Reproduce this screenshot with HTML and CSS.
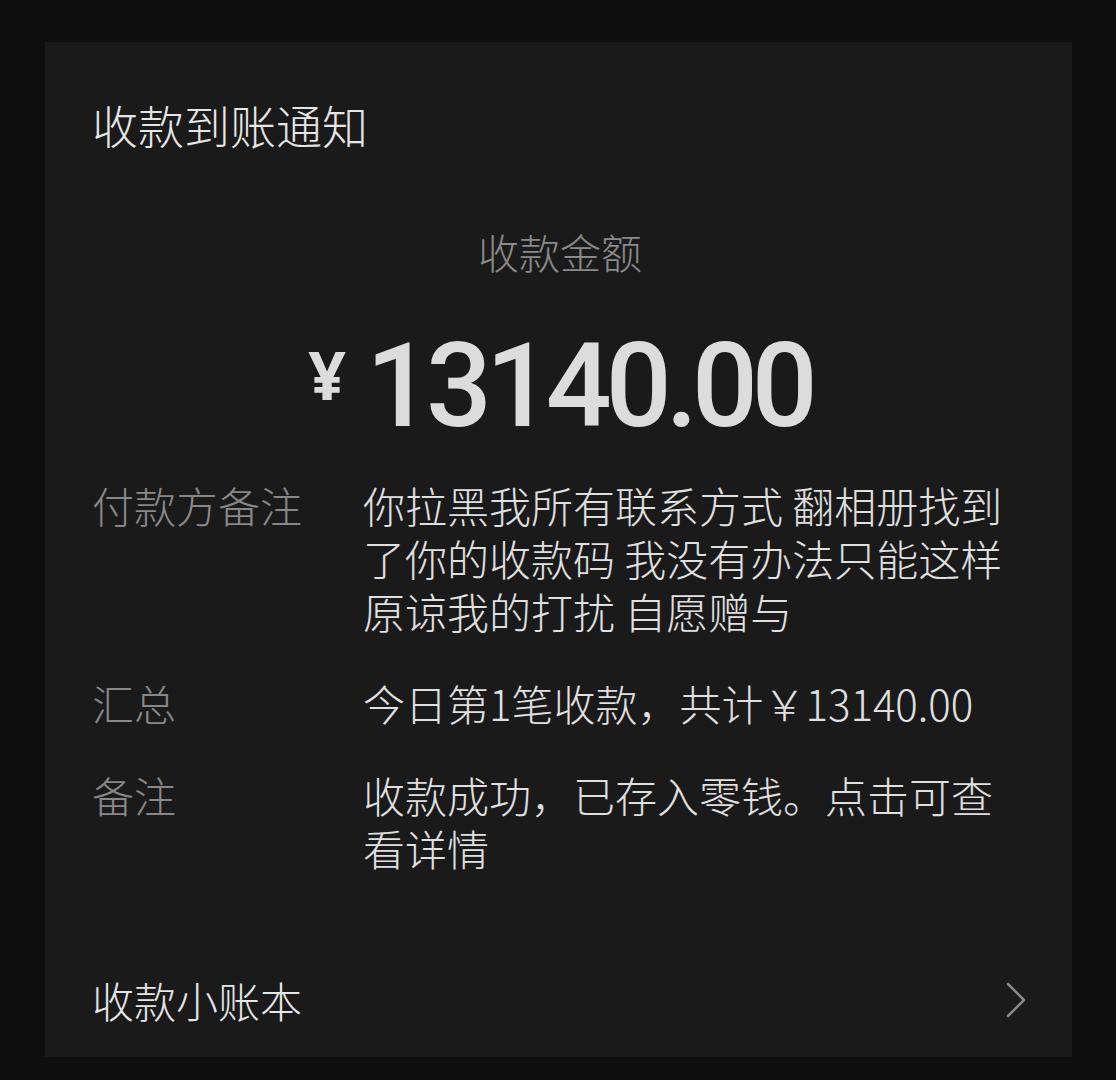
FILE: index.html
```html
<!DOCTYPE html>
<html lang="zh-CN">
<head>
    <meta charset="UTF-8">
    <meta name="viewport" content="width=device-width, initial-scale=1.0">
    <title>收款到账通知</title>
    <link rel="stylesheet" href="styles.css">
</head>
<body>
    <div class="notice-card">
        <h1 class="notice-title">收款到账通知</h1>

        <div class="amount-label">收款金额</div>
        <div class="amount">
            <span class="amount-sign">¥</span>
            <span class="amount-value">13140.00</span>
        </div>

        <div class="detail-list">
            <div class="detail-row">
                <div class="detail-key">付款方备注</div>
                <div class="detail-value">你拉黑我所有联系方式 翻相册找到了你的收款码 我没有办法只能这样原谅我的打扰 自愿赠与</div>
            </div>
            <div class="detail-row">
                <div class="detail-key">汇总</div>
                <div class="detail-value">今日第1笔收款，共计￥13140.00</div>
            </div>
            <div class="detail-row">
                <div class="detail-key">备注</div>
                <div class="detail-value">收款成功，已存入零钱。点击可查看详情</div>
            </div>
        </div>

        <div class="notice-footer">
            <span>收款小账本</span>
            <svg class="chevron" width="24" height="38" viewBox="0 0 24 38">
                <polyline points="4,3 20,19 4,35" fill="none" stroke="#8a8a8a" stroke-width="2.5" stroke-linecap="round" stroke-linejoin="round"/>
            </svg>
        </div>
    </div>
</body>
</html>
```

FILE: styles.css
```css
/* Payment notice card, dark theme */
body {
    margin: 0;
    background-color: #0e0e0e;
    font-family: "Noto Sans CJK SC", "Noto Sans", sans-serif;
    font-weight: 300;
    color: #e2e2e2;
}
.notice-card {
    display: flex;
    flex-direction: column;
    box-sizing: border-box;
    width: 1027px;
    height: 1015px;
    margin: 42px 0 0 45px;
    padding: 50px 44px 27px 47px;
    background-color: #1a1a1a;
}
.notice-title {
    margin: 0;
    font-size: 46px;
    font-weight: 300;
    line-height: 64px;
    color: #e6e6e6;
}
.amount-label {
    margin-top: 67px;
    text-align: center;
    font-size: 41px;
    line-height: 56px;
    color: #8a8a8a;
}
.amount {
    display: flex;
    justify-content: center;
    align-items: flex-start;
    margin-top: 42px;
    height: 130px;
    color: #dcdcdc;
}
.amount-sign {
    font-family: "Noto Sans", sans-serif;
    font-size: 66px;
    font-weight: bold;
    line-height: 1;
    margin: 20px 20px 0 0;
}
.amount-value {
    font-family: Roboto, sans-serif;
    font-weight: 500;
    font-size: 116px;
    letter-spacing: -6px;
    line-height: 130px;
}
.detail-list {
    margin-top: 27px;
    display: flex;
    flex-direction: column;
    gap: 39px;
}
.detail-row {
    display: flex;
    font-size: 42px;
    line-height: 53px;
}
.detail-key {
    width: 271px;
    flex-shrink: 0;
    color: #888;
}
.detail-value {
    width: 655px;
    color: #e0e0e0;
}
.notice-footer {
    margin-top: auto;
    display: flex;
    justify-content: space-between;
    align-items: center;
    font-size: 42px;
    line-height: 60px;
    color: #e6e6e6;
}
```
